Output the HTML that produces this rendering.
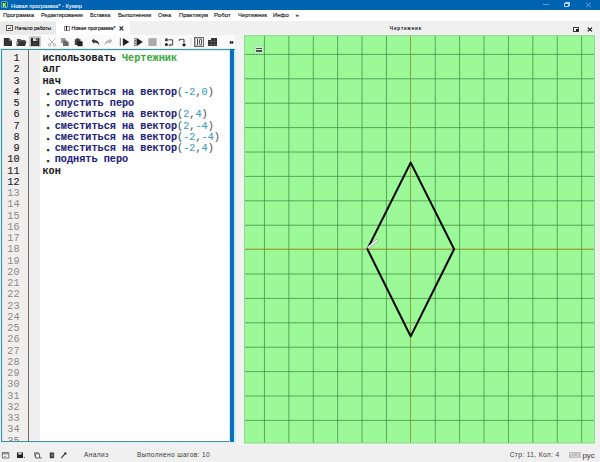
<!DOCTYPE html>
<html><head><meta charset="utf-8">
<style>
*{margin:0;padding:0;box-sizing:border-box}
html,body{width:600px;height:462px;overflow:hidden;background:#f0f0f0;font-family:"Liberation Sans",sans-serif}
body{position:relative}
.a{position:absolute}
.t{position:absolute;white-space:pre;line-height:1}
.mi{position:absolute;top:12.2px;font-size:6.2px;color:#111;-webkit-text-stroke:0.12px #111;white-space:pre;line-height:1;transform-origin:0 0}
.ln{position:absolute;left:0px;width:19.5px;text-align:right;font-family:"Liberation Mono",monospace;font-size:10.2px;line-height:11.25px;color:#1e1e1e;white-space:pre;-webkit-text-stroke:0.15px currentColor}
.ln.g{color:#8a8a8a;-webkit-text-stroke:0}
.cl{position:absolute;left:42.5px;font-family:"Liberation Mono",monospace;font-size:10.2px;line-height:11.25px;white-space:pre;font-weight:bold;color:#1a1a1a;-webkit-text-stroke:0.1px currentColor}
.dt{position:relative;left:2.4px;color:#222;-webkit-text-stroke:0.6px #222}
.mod{color:#3aa83a}
.cmd{color:#23237a}
.num{color:#3a9cc4;font-weight:normal;-webkit-text-stroke:0.1px currentColor}
.pn{color:#555;font-weight:normal;-webkit-text-stroke:0.1px currentColor}
.st{position:absolute;top:451.8px;font-size:6.6px;letter-spacing:0.38px;color:#3a3a3a;white-space:pre;line-height:1}
</style></head><body>
<!-- title bar -->
<div class="a" style="left:0;top:0;width:600px;height:10px;background:#0063b1"></div>
<div class="a" style="left:1.3px;top:1.3px;width:7.2px;height:7.2px;background:#1d5c24;border:0.8px solid #4ea4c4;border-radius:1px"></div>
<svg class="a" style="left:0;top:0" width="10" height="10" viewBox="0 0 10 10"><path d="M3.4 2.9V7.1M3.6 5.2L5.9 2.9M4.2 4.7L6 7.1" stroke="#b4f2b4" stroke-width="1.1" fill="none"/></svg>
<div class="t" style="left:10.9px;top:2.6px;font-size:6px;color:#f4f8fc;-webkit-text-stroke:0.08px #f4f8fc;transform:scaleX(0.955);transform-origin:0 0">Новая программа* - Кумир</div>
<div class="a" style="left:542.7px;top:4.4px;width:6px;height:0.6px;background:#5f9ad0"></div>
<div class="a" style="left:564.3px;top:3.2px;width:4.3px;height:3.6px;border:0.6px solid #b0d0ec"></div>
<div class="a" style="left:565.4px;top:2.3px;width:4.2px;height:3.6px;border-top:0.6px solid #b0d0ec;border-right:0.6px solid #b0d0ec"></div>
<svg class="a" style="left:585px;top:2px" width="7" height="6" viewBox="0 0 7 6"><path d="M1 0.7L5.8 5.3M5.8 0.7L1 5.3" stroke="#b4d2ee" stroke-width="0.6"/></svg>
<!-- menu -->
<div class="a" style="left:0;top:10px;width:600px;height:11.2px;background:#fff"></div>
<div class="mi" style="left:3.23px;transform:scaleX(0.954)">Программа</div>
<div class="mi" style="left:41.26px;transform:scaleX(0.895)">Редактирование</div>
<div class="mi" style="left:90.37px;transform:scaleX(0.884)">Вставка</div>
<div class="mi" style="left:117.54px;transform:scaleX(0.926)">Выполнение</div>
<div class="mi" style="left:157.85px;transform:scaleX(0.911)">Окна</div>
<div class="mi" style="left:178.83px;transform:scaleX(0.957)">Практикум</div>
<div class="mi" style="left:214.32px;transform:scaleX(0.983)">Робот</div>
<div class="mi" style="left:237.53px;transform:scaleX(0.948)">Чертежник</div>
<div class="mi" style="left:273.22px;transform:scaleX(0.965)">Инфо</div>
<div class="mi" style="left:295.6px">»</div>
<!-- tabs -->
<div class="a" style="left:0;top:21.6px;width:57px;height:12.6px;background:#e9e9e9;border-right:0.6px solid #dadada"></div>
<div class="a" style="left:6px;top:24.6px;width:6.5px;height:6.8px;border:0.6px solid #5a5a5a;background:#f0f0f0"></div>
<div class="a" style="left:7.6px;top:27.6px;width:2.6px;height:0.7px;background:#444"></div><div class="a" style="left:9.9px;top:27.1px;width:1px;height:1.7px;background:#777"></div>
<div class="t" style="left:14.8px;top:26.4px;font-size:5.1px;color:#111;-webkit-text-stroke:0.14px #111">Начало работы</div>
<div class="a" style="left:56.3px;top:21.3px;width:74px;height:13.7px;background:#fff"></div>
<div class="a" style="left:63.7px;top:25.8px;width:6px;height:5px;border:0.6px solid #8a8a8a;background:#f7f7f7"></div>
<div class="a" style="left:65.8px;top:26.2px;width:1.2px;height:4.2px;background:#111"></div>
<div class="t" style="left:71.5px;top:26.4px;font-size:5.1px;color:#111;-webkit-text-stroke:0.14px #111">Новая программа*</div>
<svg class="a" style="left:118.5px;top:26px" width="5" height="5" viewBox="0 0 5 5"><path d="M0.6 0.4L4.2 4.3M4.2 0.4L0.6 4.3" stroke="#222" stroke-width="1.1"/></svg>
<!-- right panel header -->
<div class="t" style="left:389.8px;top:26.6px;font-size:4.7px;font-weight:bold;letter-spacing:0.8px;color:#111">Чертежник</div>
<div class="a" style="left:573.2px;top:26.6px;width:5.4px;height:5px;border:0.6px solid #3a3a3a;border-top-width:0.9px;background:#f4f4f4"></div>
<div class="a" style="left:575.6px;top:28.8px;width:2.4px;height:2.2px;background:#111"></div>
<svg class="a" style="left:587px;top:27px" width="6" height="5" viewBox="0 0 6 5"><path d="M0.7 0.6L5 4.4M5 0.6L0.7 4.4" stroke="#111" stroke-width="1.2"/></svg>
<!-- toolbar -->
<div class="a" style="left:0;top:35px;width:235px;height:13px;background:#fafafa"></div>
<div class="a" style="left:28.9px;top:36px;width:12.4px;height:11.3px;background:#e2e2e2;border:0.6px solid #cfcfcf"></div>
<svg class="a" style="left:0;top:35px" width="236" height="13" viewBox="0 35 236 13">
 <!-- new -->
 <path d="M3.8 38.1H9L12 41V46H3.8Z" fill="#333"/><path d="M9 38.1V41H12" fill="#888"/>
 <!-- open -->
 <path d="M17 39H20.5L21.5 40H25.5V42H17Z" fill="#555"/><path d="M17 46L18.6 41.6H26.6L25 46Z" fill="#333"/><path d="M17 41.5V46" stroke="#333" stroke-width="0.8"/>
 <!-- save -->
 <path d="M30.8 37.8H39.4V46H30.8Z" fill="#2a2a2a"/><path d="M33 38.2H37.4V41H33Z" fill="#e0e0e0"/><path d="M35.8 38.6H36.8V40.6H35.8Z" fill="#333"/><path d="M32.5 42.5H37.8V45.6H32.5Z" fill="#3e3e3e"/>
 <!-- scissors -->
 <path d="M48.5 38.5L54 44M55.5 38.5L50 44" stroke="#a8a8a8" stroke-width="0.9" fill="none"/><circle cx="49.6" cy="45" r="1.3" stroke="#a8a8a8" stroke-width="0.8" fill="none"/><circle cx="54.6" cy="45" r="1.3" stroke="#a8a8a8" stroke-width="0.8" fill="none"/>
 <!-- copy -->
 <path d="M60.9 38H65.5V43H60.9Z" fill="#999"/><path d="M63 40.5H66.5L68.7 42.5V46H63Z" fill="#6a6a6a"/>
 <!-- paste -->
 <path d="M74.8 39.2H80.5V45H74.8Z" fill="#444"/><path d="M76.3 38.4H79V39.6H76.3Z" fill="#222"/><path d="M77.3 41.3H82.6V46.2H77.3Z" fill="#222"/>
 <!-- undo -->
 <path d="M91.5 40.8L94.2 38.6V40.2C97.5 40.2 99.2 41.8 99.2 45.5C98.3 43.5 96.8 42.4 94.2 42.4V43.9Z" fill="#333"/>
 <!-- redo -->
 <path d="M112.3 40.8L109.6 38.6V40.2C106.3 40.2 104.6 41.8 104.6 45.5C105.5 43.5 107 42.4 109.6 42.4V43.9Z" fill="#b5b5b5"/>
 <path d="M120.3 38V46" stroke="#555" stroke-width="0.9"/>
 <!-- play -->
 <path d="M122.9 38.1L129.3 42L122.9 46Z" fill="#1e1e1e"/>
 <!-- step -->
 <path d="M134.1 38.1H136.6V46H134.1Z" fill="#777"/><path d="M134.7 39H136V40H134.7ZM134.7 41.5H136V42.5H134.7ZM134.7 44H136V45H134.7Z" fill="#ddd"/><path d="M136.8 38.1L142.8 42L136.8 46Z" fill="#1e1e1e"/>
 <!-- stop -->
 <path d="M148.4 38.1H156.6V46H148.4Z" fill="#ababab"/>
 <path d="M160.4 38V46" stroke="#e2e2e2" stroke-width="0.8"/>
 <!-- step in -->
 <path d="M165 38.5H167.8V41.2H165Z" fill="#444"/><circle cx="166.4" cy="44.6" r="1.5" fill="#1e1e1e"/><path d="M168.3 39.8H172.6V45H169.8" stroke="#333" stroke-width="0.9" fill="none"/><path d="M168.5 45L170.3 43.8V46.2Z" fill="#333"/>
 <!-- step out -->
 <path d="M179.3 41V39.3H184V42" stroke="#333" stroke-width="0.9" fill="none"/><path d="M182.8 41.6H185.2L184 42.8Z" fill="#333"/><circle cx="184" cy="44.8" r="1.6" fill="#1e1e1e"/>
 <path d="M190.9 38V46" stroke="#d5d5d5" stroke-width="0.8"/>
</svg>
<!-- IO icon -->
<div class="a" style="left:193.9px;top:37px;width:9.7px;height:10.1px;background:#ececec;border:0.8px solid #6a6a6a"></div>
<div class="a" style="left:195.1px;top:38.2px;width:7.3px;height:7.7px;background:#fafafa;border:0.5px solid #bbb"></div>
<div class="a" style="left:196.6px;top:39.4px;width:0.8px;height:5.3px;background:#444"></div>
<div class="a" style="left:198.5px;top:39.4px;width:3px;height:5.3px;border:0.7px solid #444;border-radius:1.2px"></div>
<!-- grid icon -->
<div class="a" style="left:207.7px;top:37.8px;width:9.8px;height:8.7px;background:#2a2a2a"></div>
<div class="a" style="left:208.2px;top:38.2px;width:2.4px;height:2.2px;background:#eee"></div>
<div class="a" style="left:210.9px;top:37.8px;width:0.5px;height:8.7px;background:#555"></div>
<div class="a" style="left:214.1px;top:37.8px;width:0.5px;height:8.7px;background:#555"></div>
<div class="a" style="left:207.7px;top:40.7px;width:9.8px;height:0.5px;background:#555"></div>
<div class="a" style="left:207.7px;top:43.6px;width:9.8px;height:0.5px;background:#555"></div>
<svg class="a" style="left:229px;top:40px" width="6" height="5" viewBox="0 0 6 5"><path d="M0.9 1.2L2 2.4L0.9 3.6M2.7 1.2L3.8 2.4L2.7 3.6" stroke="#111" stroke-width="1.15" fill="none"/></svg>
<!-- editor -->
<div class="a" style="left:0;top:47.6px;width:236px;height:395.4px;border:1px solid #d6f3f8;border-right:none"></div>
<div class="a" style="left:0.8px;top:48.7px;width:234.4px;height:393.3px;background:#fff;border:1px solid #4c8d9c"></div>
<div class="a" style="left:1.8px;top:49.7px;width:1px;height:391.3px;background:#c9eef7"></div>
<div class="a" style="left:1.8px;top:49.7px;width:228px;height:1px;background:#d9f4f9"></div>
<div class="a" style="left:2.7px;top:49.5px;width:25.6px;height:391.5px;background:#f1eeee"></div>
<div class="a" style="left:28.2px;top:49.5px;width:1px;height:391.5px;background:#6e6e6e"></div>
<div class="a" style="left:29.2px;top:49.5px;width:10.8px;height:391.5px;background:#efefef"></div>
<div class="a" style="left:229.3px;top:49.5px;width:6.4px;height:392px;background:#cdeef8"></div>
<div class="a" style="left:230.3px;top:49.2px;width:3.7px;height:392.6px;background:#0b6fc0"></div>
<div class="a" style="left:0;top:49.5px;width:230px;height:391.5px;overflow:hidden"><div class="a" style="left:0;top:3.6px;width:230px;height:400px">
<div class="ln" style="top:0.00px">1</div>
<div class="ln" style="top:11.25px">2</div>
<div class="ln" style="top:22.50px">3</div>
<div class="ln" style="top:33.75px">4</div>
<div class="ln" style="top:45.00px">5</div>
<div class="ln" style="top:56.25px">6</div>
<div class="ln" style="top:67.50px">7</div>
<div class="ln" style="top:78.75px">8</div>
<div class="ln" style="top:90.00px">9</div>
<div class="ln" style="top:101.25px">10</div>
<div class="ln" style="top:112.50px">11</div>
<div class="ln" style="top:123.75px">12</div>
<div class="ln g" style="top:135.00px">13</div>
<div class="ln g" style="top:146.25px">14</div>
<div class="ln g" style="top:157.50px">15</div>
<div class="ln g" style="top:168.75px">16</div>
<div class="ln g" style="top:180.00px">17</div>
<div class="ln g" style="top:191.25px">18</div>
<div class="ln g" style="top:202.50px">19</div>
<div class="ln g" style="top:213.75px">20</div>
<div class="ln g" style="top:225.00px">21</div>
<div class="ln g" style="top:236.25px">22</div>
<div class="ln g" style="top:247.50px">23</div>
<div class="ln g" style="top:258.75px">24</div>
<div class="ln g" style="top:270.00px">25</div>
<div class="ln g" style="top:281.25px">26</div>
<div class="ln g" style="top:292.50px">27</div>
<div class="ln g" style="top:303.75px">28</div>
<div class="ln g" style="top:315.00px">29</div>
<div class="ln g" style="top:326.25px">30</div>
<div class="ln g" style="top:337.50px">31</div>
<div class="ln g" style="top:348.75px">32</div>
<div class="ln g" style="top:360.00px">33</div>
<div class="ln g" style="top:371.25px">34</div>
<div class="ln g" style="top:382.50px">35</div>
<div class="cl" style="top:0.00px"><span>использовать</span> <span class="mod">Чертежник</span></div>
<div class="cl" style="top:11.25px">алг</div>
<div class="cl" style="top:22.50px">нач</div>
<div class="cl" style="top:33.75px"><span class="dt">.</span> <span class="cmd">сместиться на вектор</span><span class="pn">(</span><span class="num">-2</span><span class="pn">,</span><span class="num">0</span><span class="pn">)</span></div>
<div class="cl" style="top:45.00px"><span class="dt">.</span> <span class="cmd">опустить перо</span></div>
<div class="cl" style="top:56.25px"><span class="dt">.</span> <span class="cmd">сместиться на вектор</span><span class="pn">(</span><span class="num">2</span><span class="pn">,</span><span class="num">4</span><span class="pn">)</span></div>
<div class="cl" style="top:67.50px"><span class="dt">.</span> <span class="cmd">сместиться на вектор</span><span class="pn">(</span><span class="num">2</span><span class="pn">,</span><span class="num">-4</span><span class="pn">)</span></div>
<div class="cl" style="top:78.75px"><span class="dt">.</span> <span class="cmd">сместиться на вектор</span><span class="pn">(</span><span class="num">-2</span><span class="pn">,</span><span class="num">-4</span><span class="pn">)</span></div>
<div class="cl" style="top:90.00px"><span class="dt">.</span> <span class="cmd">сместиться на вектор</span><span class="pn">(</span><span class="num">-2</span><span class="pn">,</span><span class="num">4</span><span class="pn">)</span></div>
<div class="cl" style="top:101.25px"><span class="dt">.</span> <span class="cmd">поднять перо</span></div>
<div class="cl" style="top:112.50px">кон</div>
</div></div>
<!-- drawing -->
<div class="a" style="left:235.5px;top:35px;width:7px;height:410px;background:#f3f2f3"></div>
<svg class="a" style="left:0;top:0" width="600" height="462" viewBox="0 0 600 462">
<rect x="242.6" y="34" width="354" height="411" fill="#e9fae9"/><rect x="244" y="35.2" width="351" height="408.2" fill="#9cf998"/>

<path d="M264.45 36V443M288.85 36V443M313.25 36V443M337.65 36V443M362.05 36V443M386.45 36V443M435.25 36V443M459.65 36V443M484.05 36V443M508.45 36V443M532.85 36V443M557.25 36V443M581.65 36V443M245 54.40H594M245 78.80H594M245 103.20H594M245 127.60H594M245 152.00H594M245 176.40H594M245 200.80H594M245 225.20H594M245 274.00H594M245 298.40H594M245 322.80H594M245 347.20H594M245 371.60H594M245 396.00H594M245 420.40H594" stroke="#3f8f3f" stroke-width="0.75" fill="none"/>
<path d="M410.5 36V443" stroke="#8a9a28" stroke-width="0.9" fill="none"/><path d="M245 249.2H594" stroke="#8f8a1e" stroke-width="1" fill="none"/>
<rect x="244.5" y="35.7" width="350" height="407.2" fill="none" stroke="#9fd09f" stroke-width="1"/>
<path d="M367.4 249.1L410.7 162.6L454.1 249.1L410.7 336.4Z" fill="none" stroke="#080808" stroke-width="2.1" stroke-linejoin="round"/>
<path d="M368.5 247.5L376.6 240.6" stroke="#888" stroke-width="2.6" stroke-linecap="round"/><path d="M368.5 247.5L376.6 240.6" stroke="#fff" stroke-width="1.6" stroke-linecap="round"/>
</svg>
<div class="a" style="left:254px;top:45px;width:9.6px;height:9.2px;background:#bdf3bd;border:0.6px solid #a9dfa9"></div>
<div class="a" style="left:256px;top:47.9px;width:6px;height:1.6px;background:#4e4e4e"></div>
<div class="a" style="left:256px;top:50.3px;width:6px;height:1.7px;background:#4e4e4e"></div>
<!-- status -->
<svg class="a" style="left:0;top:450px" width="70" height="10" viewBox="0 450 70 10">
 <path d="M2.3 452.6H8.8V458H2.3Z" fill="none" stroke="#555" stroke-width="0.8"/><path d="M2.3 453.8H8.8" stroke="#555" stroke-width="0.8"/><path d="M4 456.5H6" stroke="#777" stroke-width="0.7"/>
 <path d="M17 452.4H23V458H17Z" fill="#222"/><path d="M18.3 452.6H21.5V454.6H18.3Z" fill="#ddd"/><path d="M23.8 457.2H25V458H23.8Z" fill="#222"/>
 <path d="M34.5 456.5V452.5H38.5" fill="none" stroke="#777" stroke-width="0.8"/><path d="M35.6 453.7H39.4V458H35.6Z" fill="#f8f8f8" stroke="#3a3a3a" stroke-width="0.8"/><path d="M39.8 457.9H41.8" stroke="#333" stroke-width="0.8"/>
 <path d="M50 452.8H53.8V458H50Z" fill="#333" stroke="#3a3a3a" stroke-width="0.4"/><path d="M51.2 454.6H52.6V456.4H51.2Z" fill="#aaa"/><path d="M49.8 453.2H54" stroke="#555" stroke-width="0.5"/>
 <path d="M61.2 458L65.6 453.2" stroke="#222" stroke-width="1.1"/><path d="M64.6 452.6L66.4 454.2" stroke="#222" stroke-width="1.4"/>
</svg>
<div class="st" style="left:84px">Анализ</div>
<div class="st" style="left:137px">Выполнено шагов: 10</div>
<div class="st" style="left:509.7px">Стр: 11, Кол: 4</div>
<svg class="a" style="left:568px;top:451px" width="14" height="8" viewBox="568 451 14 8"><rect x="569" y="452" width="11.7" height="5.8" fill="#b9b9b9"/><path d="M570 453.3H572M573 453.3H575M577 453.3H579.6M570 455H574M576 455H579.6M571 456.6H578.5" stroke="#e6e6e6" stroke-width="0.7"/></svg>
<div class="st" style="left:582.4px;top:451.6px;font-size:8px;letter-spacing:0;color:#333">рус</div>
</body></html>
